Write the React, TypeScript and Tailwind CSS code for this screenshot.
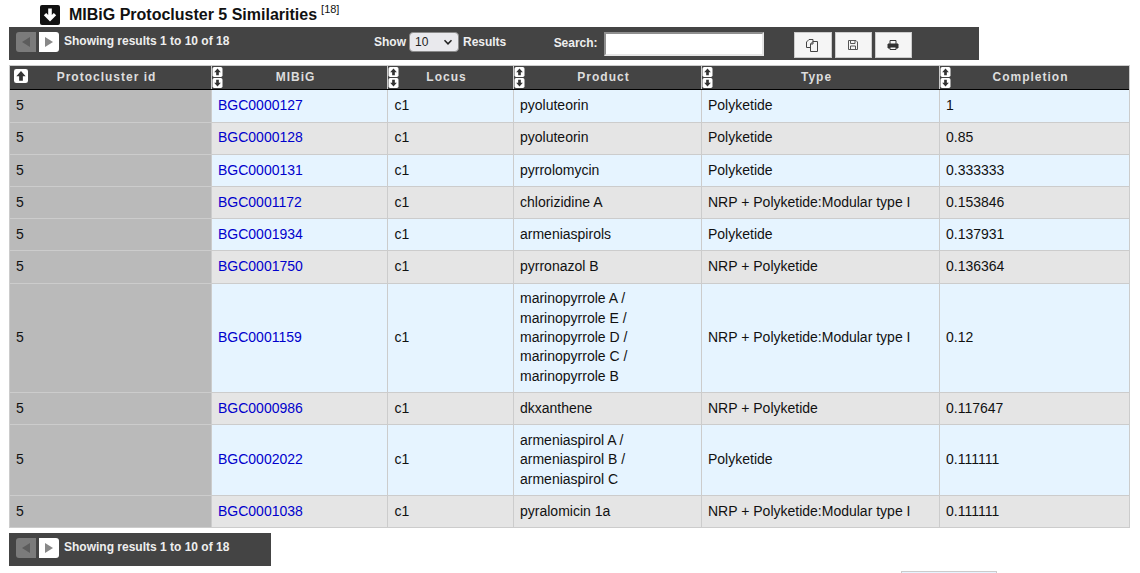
const rows = [
  { id: "BGC0000127", product: ["pyoluteorin"], type: "Polyketide", completion: "1", h: "h-[31.6px]" },
  { id: "BGC0000128", product: ["pyoluteorin"], type: "Polyketide", completion: "0.85", h: "h-[32.2px]" },
  { id: "BGC0000131", product: ["pyrrolomycin"], type: "Polyketide", completion: "0.333333", h: "h-[32.2px]" },
  { id: "BGC0001172", product: ["chlorizidine A"], type: "NRP + Polyketide:Modular type I", completion: "0.153846", h: "h-[32.2px]" },
  { id: "BGC0001934", product: ["armeniaspirols"], type: "Polyketide", completion: "0.137931", h: "h-[32.2px]" },
  { id: "BGC0001750", product: ["pyrronazol B"], type: "NRP + Polyketide", completion: "0.136364", h: "h-[32.2px]" },
  {
    id: "BGC0001159",
    product: ["marinopyrrole A /", "marinopyrrole E /", "marinopyrrole D /", "marinopyrrole C /", "marinopyrrole B"],
    type: "NRP + Polyketide:Modular type I",
    completion: "0.12",
    h: "h-[109.5px]",
  },
  { id: "BGC0000986", product: ["dkxanthene"], type: "NRP + Polyketide", completion: "0.117647", h: "h-[32.2px]" },
  {
    id: "BGC0002022",
    product: ["armeniaspirol A /", "armeniaspirol B /", "armeniaspirol C"],
    type: "Polyketide",
    completion: "0.111111",
    h: "h-[70.5px]",
  },
  { id: "BGC0001038", product: ["pyralomicin 1a"], type: "NRP + Polyketide:Modular type I", completion: "0.111111", h: "h-[32.2px]" },
];

const columns = [
  { label: "Protocluster id", width: "w-[201px]", active: true },
  { label: "MIBiG", width: "w-[176px]" },
  { label: "Locus", width: "w-[126px]" },
  { label: "Product", width: "w-[188px]" },
  { label: "Type", width: "w-[238px]" },
  { label: "Completion", width: "w-[190px]" },
];

const SortIcon = ({ up, size }: { up: boolean; size: string }) => (
  <svg viewBox="0 0 12 12" className={`${size} block`}>
    <rect width="12" height="12" rx="2" fill="#fff" />
    <path
      d={up ? "M6 1.8 10 6.2H7.6V10H4.4V6.2H2Z" : "M6 10.2 10 5.8H7.6V2H4.4V5.8H2Z"}
      fill="#333"
    />
  </svg>
);

const Pager = () => (
  <div className="flex items-start">
    <div className="mt-[5px] ml-[7px] flex h-5 w-5 items-center justify-center rounded-l-[3px] bg-[#7b7b7b]">
      <div className="h-0 w-0 border-y-[5px] border-r-[8px] border-y-transparent border-r-[#5c5c5c]" />
    </div>
    <div className="mt-[5px] ml-[3px] flex h-5 w-5 items-center justify-center rounded-r-[3px] bg-white">
      <div className="h-0 w-0 border-y-[5px] border-l-[8px] border-y-transparent border-l-[#888888]" />
    </div>
    <span className="mt-[5px] ml-[5px] text-xs leading-[18px] font-bold text-[#eeeeee]">
      Showing results 1 to 10 of 18
    </span>
  </div>
);

const ToolButton = ({ children, width }: { children: React.ReactNode; width: string }) => (
  <button className={`${width} flex h-[26px] items-center justify-center border border-[#cccccc] bg-[#f5f5f5]`}>
    {children}
  </button>
);

export default function App() {
  return (
    <div className="h-[573px] w-[1140px] overflow-hidden bg-white font-['Liberation_Sans',Arial,sans-serif] text-[14px] text-[#111111]">
      <div className="flex h-[27px] items-start pl-[40px]">
        <svg viewBox="0 0 20 20" className="mt-[5px] h-5 w-5">
          <rect width="20" height="20" rx="2" fill="#111" />
          <path d="M10 16.5 3.8 10.2 6.2 8 8.2 10V3.5H11.8V10L13.8 8 16.2 10.2Z" fill="#fff" />
        </svg>
        <h2 className="mt-[5px] ml-[9px] text-base leading-5 font-bold text-[#111111]">MIBiG Protocluster 5 Similarities</h2>
        <sup className="mt-[9px] ml-[4px] text-[11px] leading-none">[18]</sup>
      </div>

      <div className="ml-[9px] flex h-[33px] w-[970px] items-start bg-[#444444]">
        <div className="w-[365px]">
          <Pager />
        </div>
        <div className="mt-[5px] flex items-center">
          <span className="text-xs font-bold text-[#eeeeee]">Show</span>
          <div className="ml-[3px] flex h-5 w-[50px] items-center justify-between rounded-[4px] border border-[#8a8a8a] bg-[#e9e9ed] px-[5px] text-xs text-[#222222]">
            10
            <svg viewBox="0 0 10 10" className="h-[10px] w-[10px]">
              <path d="M1.5 3.2 5 6.8 8.5 3.2" fill="none" stroke="#222" strokeWidth="1.5" />
            </svg>
          </div>
          <span className="ml-1 text-xs font-bold tracking-[-0.03px] text-[#eeeeee]">Results</span>
        </div>
        <div className="mt-[5px] ml-[47.5px] flex items-center">
          <span className="pb-[2px] text-xs font-bold tracking-[-0.03px] text-[#eeeeee]">Search:</span>
          <div className="ml-[6.5px] h-6 w-[160px] border-2 border-t-[#8f8f8f] border-r-[#e5e5e5] border-b-[#e5e5e5] border-l-[#8f8f8f] bg-white" />
        </div>
        <div className="mt-[5px] ml-[30px] flex gap-[3px]">
          <ToolButton width="w-[38px]">
            <svg viewBox="0 0 13 13" className="h-[13px] w-[13px]" fill="#f5f5f5" stroke="#444" strokeWidth="1">
              <path d="M0.5 3 3 0.5H7V8.5H0.5Z" />
              <path d="M4.5 5 7 2.5H11.5V12.5H4.5Z" />
              <path d="M7 2.5V5H4.5" fill="none" />
            </svg>
          </ToolButton>
          <ToolButton width="w-[37px]">
            <svg viewBox="0 0 12 12" className="h-3 w-3" fill="none" stroke="#555" strokeWidth="1">
              <path d="M1.5 1.5H9L10.5 3V10.5H1.5Z" />
              <path d="M3.5 1.5V4.5H8V1.5M3.5 10.5V7H8.5V10.5" />
            </svg>
          </ToolButton>
          <ToolButton width="w-[37px]">
            <svg viewBox="0 0 12 12" className="h-3 w-3" fill="none" stroke="#333">
              <path d="M3 5V1.5H9V5" strokeWidth="1" />
              <path d="M1 5H11V9H1Z" fill="#333" strokeWidth="1" />
              <path d="M3 8H9V10.5H3Z" fill="#f5f5f5" strokeWidth="1" />
            </svg>
          </ToolButton>
        </div>
      </div>

      <div className="mt-[5px] ml-[9px] w-[1121px] border border-[#cccccc]">
        <div className="flex h-6 border-b border-b-black bg-[#444444]">
          {columns.map((col, i) => (
            <div
              key={col.label}
              className={`${col.width} relative flex items-center justify-center pr-2 pb-[2px] text-xs font-bold tracking-[1px] text-[#dddddd] ${
                i > 0 ? "border-l border-[#cccccc]" : ""
              }`}
            >
              <div className="absolute top-0 left-0 flex flex-col gap-px pt-[1px]">
                {col.active ? (
                  <div className="pt-[2px] pl-[4px]">
                    <SortIcon up size="h-[14px] w-[14px]" />
                  </div>
                ) : (
                  <>
                    <SortIcon up size="h-[10px] w-[11px]" />
                    <SortIcon up={false} size="h-[10px] w-[11px]" />
                  </>
                )}
              </div>
              {col.label}
            </div>
          ))}
        </div>
        {rows.map((row, i) => {
          const bg = i % 2 === 0 ? "bg-[#e6f4ff]" : "bg-[#e5e5e5]";
          const border = i > 0 ? "border-t border-[#cccccc]" : "";
          return (
            <div key={row.id} className={`${row.h} ${bg} ${border} flex items-stretch leading-[19.4px]`}>
              <div className="flex w-[201px] items-center bg-[#bababa] px-[6px]">5</div>
              <div className="flex w-[176px] items-center border-l border-[#cccccc] px-[6px] text-[#0000cc]">{row.id}</div>
              <div className="flex w-[126px] items-center border-l border-[#cccccc] pr-[6px] pl-[6.5px]">c1</div>
              <div className="flex w-[188px] flex-col justify-center border-l border-[#cccccc] px-[6px]">
                {row.product.map((line) => (
                  <span key={line}>{line}</span>
                ))}
              </div>
              <div className="flex w-[238px] items-center border-l border-[#cccccc] px-[6px]">{row.type}</div>
              <div className="flex w-[190px] items-center border-l border-[#cccccc] px-[6px]">{row.completion}</div>
            </div>
          );
        })}
      </div>

      <div className="mt-[5px] ml-[9px] h-[33px] w-[262px] bg-[#444444]">
        <Pager />
      </div>
      <div className="mt-[5px] ml-[901px] h-[2px] w-[96px] border border-b-0 border-[#cccccc] bg-[#e6f4ff]" />
    </div>
  );
}
